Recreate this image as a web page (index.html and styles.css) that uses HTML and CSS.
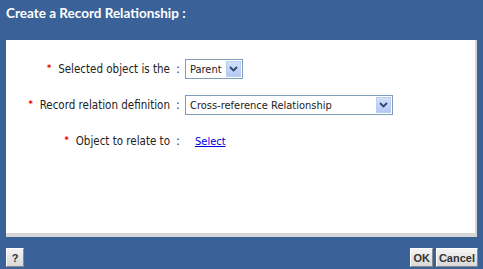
FILE: index.html
```html
<!DOCTYPE html>
<html lang="en">
<head>
    <meta charset="UTF-8">
    <title>Create a Record Relationship</title>
    <link rel="stylesheet" href="styles.css">
</head>
<body>

<div class="dialog">
    <div class="dialog-title">Create a Record Relationship :</div>

    <div class="panel">
        <div class="form-grid">
            <div class="label"><span class="req">*</span>Selected object is the</div>
            <div class="colon">:</div>
            <div class="field">
                <div class="select small">
                    <span class="select-text">Parent</span>
                    <span class="select-arrow">
                        <svg width="9" height="6" viewBox="0 0 9 6"><path d="M1 1 L4.5 4.5 L8 1" fill="none" stroke="#2d4673" stroke-width="1.8"/></svg>
                    </span>
                </div>
            </div>

            <div class="label"><span class="req">*</span>Record relation definition</div>
            <div class="colon">:</div>
            <div class="field">
                <div class="select wide">
                    <span class="select-text">Cross-reference Relationship</span>
                    <span class="select-arrow">
                        <svg width="9" height="6" viewBox="0 0 9 6"><path d="M1 1 L4.5 4.5 L8 1" fill="none" stroke="#2d4673" stroke-width="1.8"/></svg>
                    </span>
                </div>
            </div>

            <div class="label"><span class="req">*</span>Object to relate to</div>
            <div class="colon">:</div>
            <div class="field"><a href="#" class="link">Select</a></div>
        </div>
    </div>

    <div class="dialog-footer">
        <button type="button" class="btn help-btn">?</button>
        <div class="actions">
            <button type="button" class="btn">OK</button>
            <button type="button" class="btn">Cancel</button>
        </div>
    </div>
</div>

</body>
</html>
```

FILE: styles.css
```css
body {
    margin: 0;
    padding: 0;
    background-color: #3a6299;
    font-family: "DejaVu Sans Condensed", "DejaVu Sans", sans-serif;
    font-stretch: condensed;
    color: #222;
}

.dialog {
    width: 483px;
    height: 269px;
    display: flex;
    flex-direction: column;
}

.dialog-title {
    height: 40px;
    box-sizing: border-box;
    padding: 5px 0 0 6px;
    color: #fff;
    font-family: Lato, "Liberation Sans", sans-serif;
    font-stretch: normal;
    font-size: 13.5px;
    font-weight: bold;
}

.panel {
    margin: 0 6px 0 6px;
    height: 197px;
    box-sizing: border-box;
    background-color: #fff;
    border-right: 2px solid #d4d4d4;
    border-bottom: 4px solid #d6d6d6;
    padding-top: 19px;
}

.form-grid {
    display: grid;
    grid-template-columns: 164px 15px auto;
    grid-auto-rows: 20px;
    row-gap: 16px;
    align-items: center;
    font-size: 11.5px;
}

.label {
    text-align: right;
}

.req {
    color: #e00000;
    font-weight: bold;
    font-size: 9px;
    margin-right: 7px;
    position: relative;
    top: -2px;
}

.colon {
    text-align: center;
    padding-left: 1px;
}

.field {
    display: flex;
    align-items: center;
    font-size: 11px;
}

.select {
    height: 20px;
    box-sizing: border-box;
    border: 1px solid #7f9db9;
    display: flex;
    align-items: center;
    justify-content: space-between;
    padding: 0 1px 0 4px;
    background-color: #fff;
}

.select.small {
    width: 58px;
}

.select.wide {
    width: 208px;
}

.select-arrow {
    width: 15px;
    height: 16px;
    display: flex;
    align-items: center;
    justify-content: center;
    background: linear-gradient(#d2e0fb, #b4c9f3);
    border: 1px solid #b9cdf3;
    box-sizing: border-box;
}

.link {
    color: #0000dd;
    margin-left: 10px;
}

.dialog-footer {
    flex: 1;
    display: flex;
    justify-content: space-between;
    align-items: flex-start;
    padding: 11px 5px 0 6px;
}

.actions {
    display: flex;
    gap: 3px;
}

.btn {
    height: 19px;
    padding: 0 2px;
    font-family: "Liberation Sans", Arial, sans-serif;
    font-size: 11px;
    font-weight: bold;
    color: #333;
    background: linear-gradient(#f4f4f4, #d8d8d8);
    border: 1px solid;
    border-color: #fff #888 #888 #fff;
    cursor: pointer;
}

.help-btn {
    width: 18px;
}
```
